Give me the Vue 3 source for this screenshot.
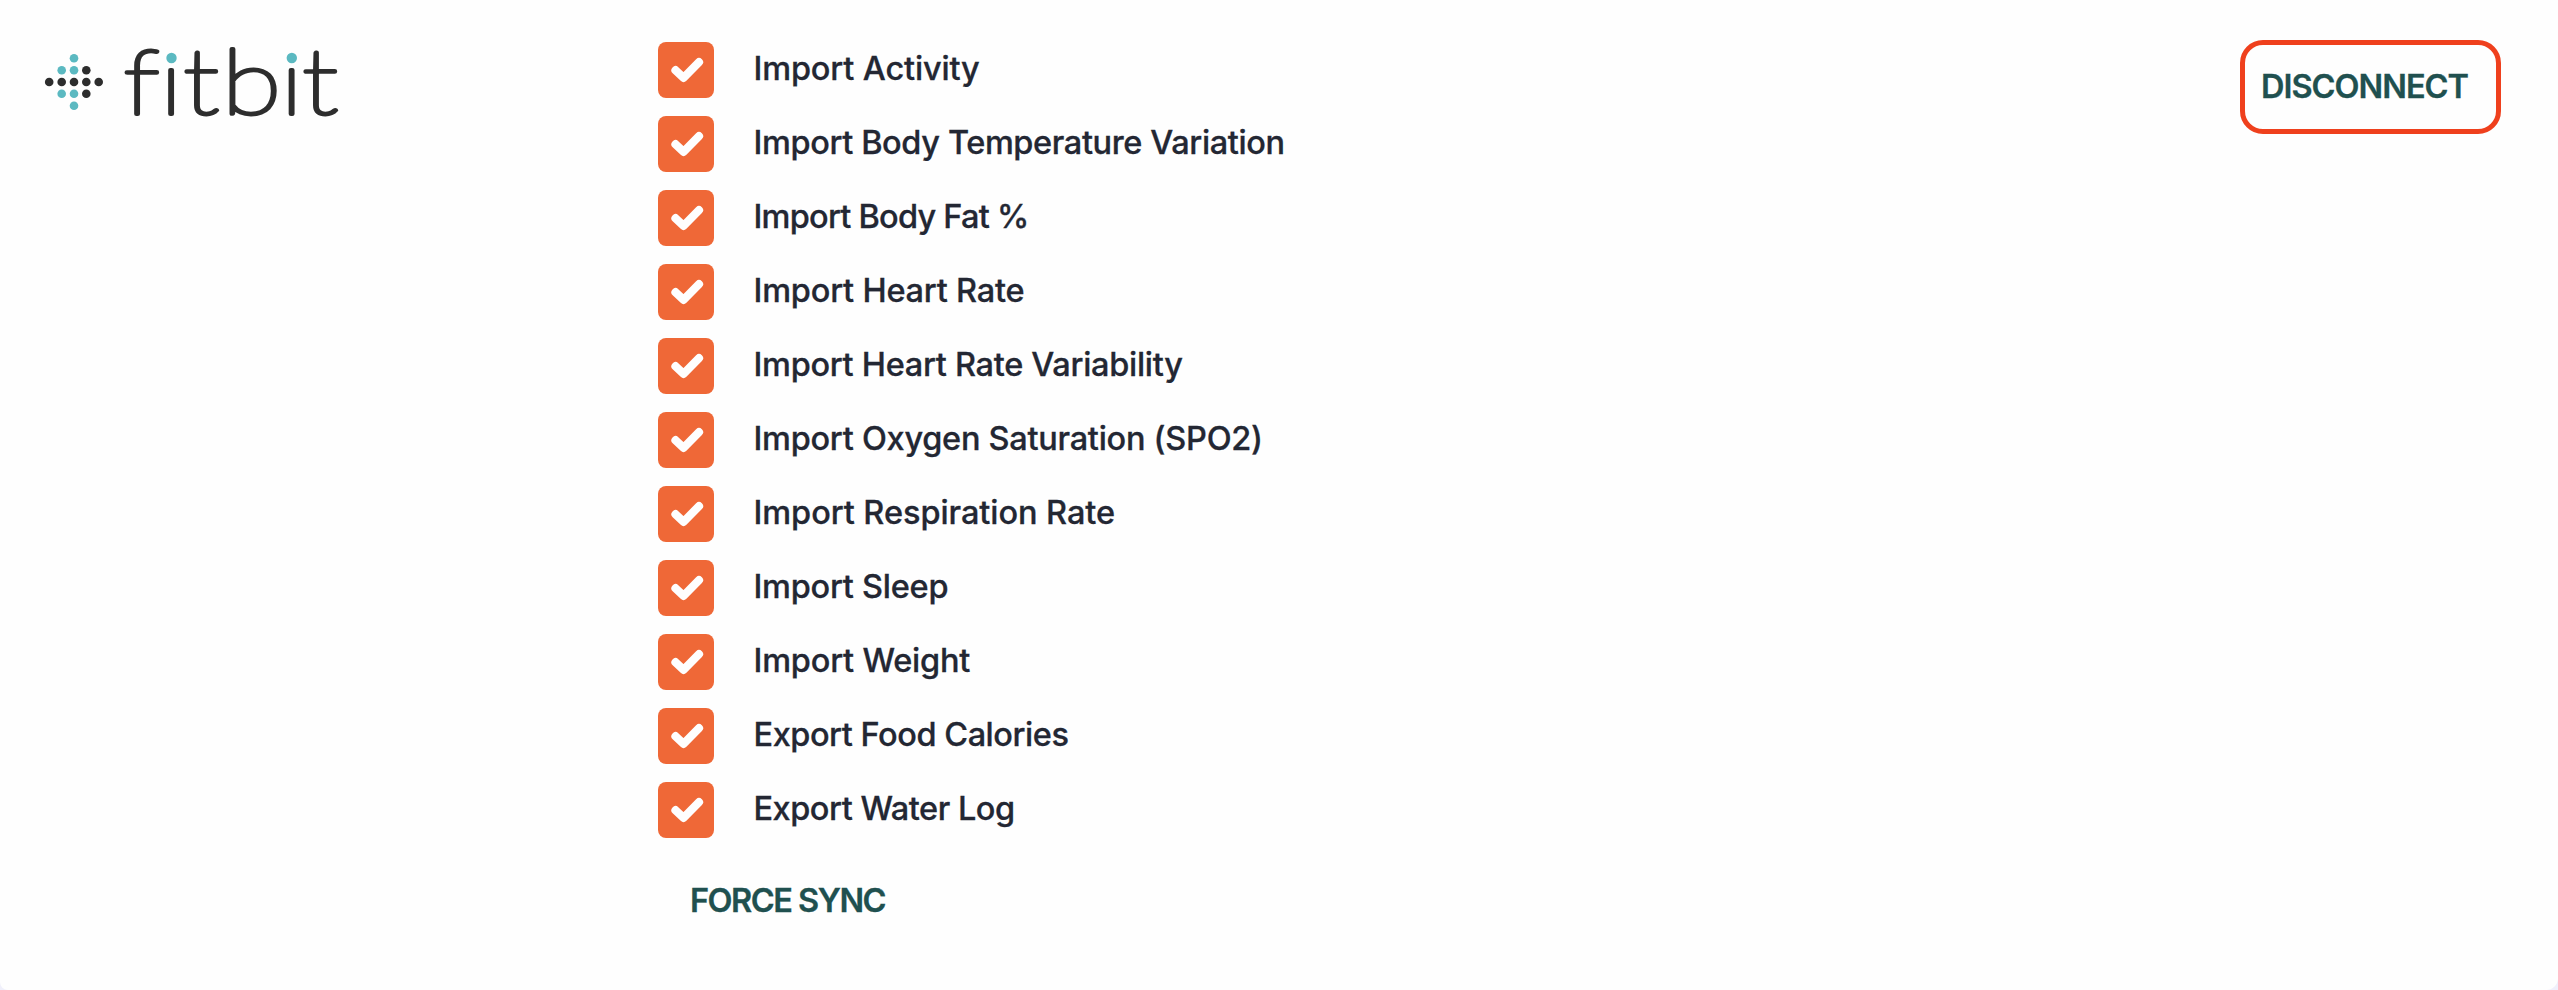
<template>
  <div class="page">
    <div class="card">
      <div class="brand">
        <svg class="logo" viewBox="0 0 310 110" role="img" aria-label="fitbit">
          <circle
            v-for="(dot, i) in dots"
            :key="i"
            :cx="dot.x"
            :cy="dot.y"
            r="4.3"
            :class="dot.teal ? 'teal' : 'dark'"
          />
          <g transform="scale(1.2 1)">
            <text class="wordmark" y="73.8" x="69.6 99.9 119.4 151.4 200.2 218.6">fitbit</text>
          </g>
          <!-- teal dots of the two i's -->
          <template v-for="x in [131.5, 251.8]" :key="x">
            <ellipse class="cover" :cx="x" cy="13" rx="7.5" ry="7" />
            <circle class="teal" :cx="x" cy="18" r="5.2" />
          </template>
        </svg>
      </div>

      <div class="settings">
        <label v-for="option in options" :key="option.label" class="option">
          <input type="checkbox" v-model="option.checked" />
          <span class="box">
            <svg v-if="option.checked" viewBox="0 0 56 56">
              <path d="M17.5 28.2L25.5 35.8L41 20.2" />
            </svg>
          </span>
          <span class="text" :style="{ letterSpacing: option.spacing + 'px' }">{{ option.label }}</span>
        </label>
        <button class="btn sync">FORCE SYNC</button>
      </div>

      <button class="btn disconnect">DISCONNECT</button>
    </div>
  </div>
</template>

<script setup>
import { ref } from "vue";

const options = ref([
  { label: "Import Activity", spacing: -0.15, checked: true },
  { label: "Import Body Temperature Variation", spacing: -0.38, checked: true },
  { label: "Import Body Fat %", spacing: -0.76, checked: true },
  { label: "Import Heart Rate", spacing: -0.2, checked: true },
  { label: "Import Heart Rate Variability", spacing: -0.29, checked: true },
  { label: "Import Oxygen Saturation (SPO2)", spacing: -0.27, checked: true },
  { label: "Import Respiration Rate", spacing: -0.06, checked: true },
  { label: "Import Sleep", spacing: -0.25, checked: true },
  { label: "Import Weight", spacing: -0.2, checked: true },
  { label: "Export Food Calories", spacing: -0.46, checked: true },
  { label: "Export Water Log", spacing: -0.48, checked: true },
]);

const dots = [
  { x: 34, y: 18.3, teal: true },
  { x: 21.7, y: 30.2, teal: true },
  { x: 34, y: 30.2, teal: true },
  { x: 46.3, y: 30.2 },
  { x: 9.2, y: 42 },
  { x: 21.7, y: 42 },
  { x: 34, y: 42 },
  { x: 46.3, y: 42 },
  { x: 58.7, y: 42 },
  { x: 21.7, y: 53.8, teal: true },
  { x: 34, y: 53.8, teal: true },
  { x: 46.3, y: 53.8 },
  { x: 34, y: 65.7, teal: true },
];
</script>

<style>
body {
  margin: 0;
  background: #f0f0fb;
}
</style>

<style scoped>
.page {
  height: 990px;
  overflow: hidden;
}
.card {
  display: flex;
  align-items: flex-start;
  height: 990px;
  padding: 40px 57px 0 40px;
  box-sizing: border-box;
  background: #fefefe;
  border-radius: 0 0 12px 8px;
  font-family: Inter, "Noto Sans", sans-serif;
}
.brand {
  width: 618px;
}
.logo {
  display: block;
  width: 310px;
  height: 110px;
  overflow: visible;
}
.teal {
  fill: #5bb9c1;
}
.dark {
  fill: #2d2d2d;
}
.cover {
  fill: #fefefe;
}
.wordmark {
  font-family: Lato, sans-serif;
  font-weight: 100;
  font-size: 91px;
  fill: #2d2d2d;
  stroke: #2d2d2d;
  stroke-width: 3.8;
  stroke-linejoin: round;
}
.settings {
  flex: 1;
  display: flex;
  flex-direction: column;
  align-items: flex-start;
  gap: 18px;
  padding-top: 2px;
}
.option {
  display: flex;
  align-items: center;
  gap: 39.5px;
  height: 56px;
}
.option input {
  display: none;
}
.box {
  width: 56px;
  height: 56px;
  border-radius: 8px;
  background: #ef6837;
}
.box svg {
  display: block;
}
.box path {
  fill: none;
  stroke: #fefefe;
  stroke-width: 8.2;
  stroke-linecap: round;
  stroke-linejoin: round;
}
.text {
  padding-bottom: 2px;
  color: #232733;
  font-size: 32.5px;
  font-weight: 500;
  line-height: 40px;
  white-space: nowrap;
  -webkit-text-stroke: 0.3px #232733;
}
.btn {
  padding: 0;
  border: 0;
  background: none;
  color: #20504f;
  font-family: inherit;
  font-size: 32.5px;
  font-weight: 600;
  line-height: 40px;
  letter-spacing: -1px;
  white-space: nowrap;
  text-align: left;
  -webkit-text-stroke: 0.3px #20504f;
}
.sync {
  margin: 25px 0 0 32px;
  letter-spacing: -1.5px;
}
.disconnect {
  width: 261px;
  height: 94px;
  padding: 0 0 0 16px;
  box-sizing: border-box;
  border: 5px solid #ef401d;
  border-radius: 23px;
}
</style>
